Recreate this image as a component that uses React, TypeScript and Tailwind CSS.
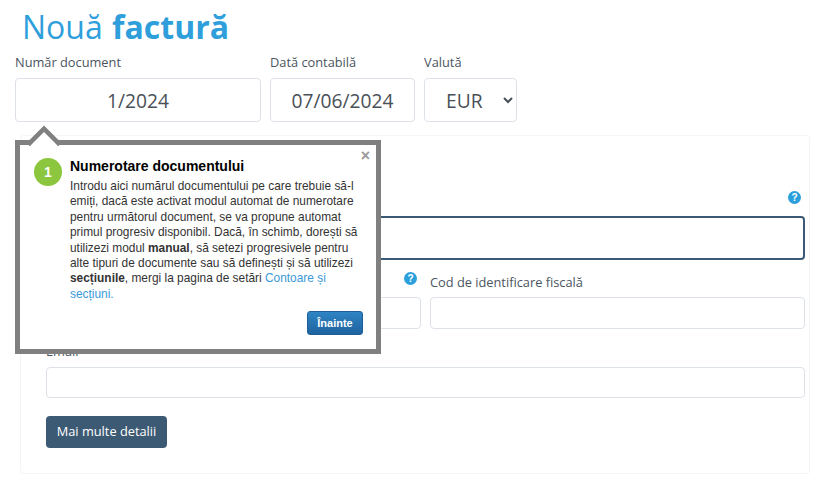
const labelClass = "block text-[12.8px] leading-[20px] text-[#4a5560]"
const inputClass = "block w-full rounded-[4px] border border-[#dde2e8] bg-white outline-none"

const HelpIcon = () => (
  <span className="flex h-[13px] w-[13px] items-center justify-center rounded-full bg-[#2a9fdc] font-['Liberation_Sans',sans-serif] text-[10px] font-bold leading-none text-white">
    ?
  </span>
)

const Tour = () => (
  <div className="absolute left-[15px] top-[140px] z-10 h-[214px] w-[366px] border-[5px] border-[#808080] bg-white font-['Liberation_Sans',sans-serif]">
    <svg className="absolute left-[9px] top-[-20px]" width="32" height="21" viewBox="0 0 32 21">
      <path d="M0 15.5 L15 0.5 L30 15.5 V21 H0 Z" fill="#808080" />
      <path d="M1 21 L15 7 L29 21 Z" fill="white" />
    </svg>
    <button className="absolute right-[6px] top-[3px] text-[16px] font-bold leading-[16px] text-[#999]">×</button>
    <div className="flex pl-[14px] pr-[14px] pt-[13px]">
      <div className="flex h-[28px] w-[28px] shrink-0 items-center justify-center rounded-full bg-[#8cc63f] text-[14px] font-bold text-white">
        1
      </div>
      <div className="ml-[8px] w-[296px]">
        <h3 className="text-[14px] font-bold leading-[16px] text-black">Numerotare documentului</h3>
        <p className="mt-[5px] text-[11.9px] leading-[15.4px] text-[#333]">
          Introdu aici numărul documentului pe care trebuie să-l emiți, dacă este activat modul automat de numerotare pentru următorul document, se va propune automat primul progresiv disponibil. Dacă, în schimb, dorești să utilizezi modul <b>manual</b>, să setezi progresivele pentru alte tipuri de documente sau să definești și să utilizezi <b>secțiunile</b>, mergi la pagina de setări <a className="text-[#3a9ad9]">Contoare și secțiuni.</a>
        </p>
      </div>
    </div>
    <div className="mt-[9px] flex justify-end pr-[13px]">
      <button className="h-[24px] w-[56px] rounded-[3px] border border-[#1d5f96] bg-gradient-to-b from-[#2f84c4] to-[#1f639f] text-[11px] font-bold text-white">
        Înainte
      </button>
    </div>
  </div>
)

export default function App() {
  return (
    <div className="relative h-[478px] w-[827px] overflow-hidden bg-white font-['Open_Sans',sans-serif]">
      <Tour />
      <div className="pl-[15px] pt-[7px]">
        <h1 className="pl-[7px] text-[32px] leading-[40px] text-[#2f9fdc]">
          Nouă <b className="ml-px">factură</b>
        </h1>
        <div className="mt-[5px] flex gap-[9px]">
          <div className="w-[246px]">
            <label className={labelClass}>Număr document</label>
            <input readOnly value="1/2024" className={`${inputClass} mt-[6px] h-[44px] text-center text-[19.2px] text-[#495057]`} />
          </div>
          <div className="w-[145px]">
            <label className={labelClass}>Dată contabilă</label>
            <input readOnly value="07/06/2024" className={`${inputClass} mt-[6px] h-[44px] text-center text-[19.2px] text-[#495057]`} />
          </div>
          <div className="w-[93px]">
            <label className={labelClass}>Valută</label>
            <select className={`${inputClass} mt-[6px] h-[44px] pl-[17px] text-[19.2px] text-[#495057]`}>
              <option>EUR</option>
            </select>
          </div>
        </div>
      </div>
      <div className="ml-[20px] mt-[13px] h-[339px] w-[790px] rounded-[4px] border border-[#f3f4f6] pl-[25px] pr-[4px] pt-[52px]">
        <div className="flex h-[28px] justify-end pr-[4px] pt-[3px]">
          <HelpIcon />
        </div>
        <div className="h-[44px] rounded-[4px] border-2 border-[#3c5a78]" />
        <div className="mt-[11px] flex gap-[9px]">
          <div className="w-[375px]">
            <div className="flex h-[26px] justify-end pr-[4px] pt-[1px]">
              <HelpIcon />
            </div>
            <div className={`${inputClass} h-[32px]`} />
          </div>
          <div className="w-[375px]">
            <label className={`${labelClass} h-[26px] pt-[1px]`}>Cod de identificare fiscală</label>
            <input readOnly className={`${inputClass} h-[32px]`} />
          </div>
        </div>
        <div className="mt-[12px]">
          <label className={`${labelClass} h-[26px]`}>Email</label>
          <input readOnly className={`${inputClass} h-[31px]`} />
        </div>
        <button className="mt-[18px] h-[32px] w-[121px] rounded-[4px] bg-[#3d5a75] text-[12.8px] text-white">
          Mai multe detalii
        </button>
      </div>
    </div>
  )
}
